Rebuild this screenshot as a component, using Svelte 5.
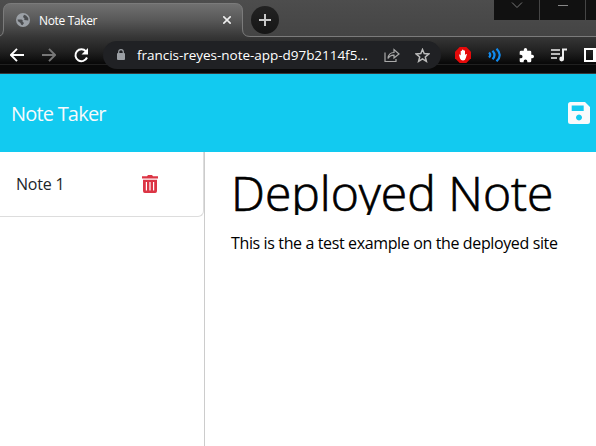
<script>
  let noteTitle = 'Deployed Note';
  let noteText = 'This is the a test example on the deployed site';
  const notes = ['Note 1'];
</script>

<div class="window">
  <div class="chrome">
    <svg class="frame" width="596" height="74" viewBox="0 0 596 74">
      <defs>
        <linearGradient id="strip" x1="0" y1="0" x2="0" y2="1">
          <stop offset="0" stop-color="#4d4d4d" /><stop offset="1" stop-color="#444" />
        </linearGradient>
        <linearGradient id="bar" gradientUnits="userSpaceOnUse" x1="0" y1="3" x2="0" y2="64">
          <stop offset="0" stop-color="#727272" /><stop offset=".28" stop-color="#585858" />
          <stop offset=".56" stop-color="#363636" /><stop offset=".8" stop-color="#202020" /><stop offset="1" stop-color="#070707" />
        </linearGradient>
      </defs>
      <rect width="596" height="37" fill="url(#strip)" />
      <path d="M0 36Q3.500 35 3.500 30V11Q3.500 3.500 11 3.500H235Q242.500 3.500 242.500 11V29Q242.500 36.500 250 36.500H596V64H0Z" fill="url(#bar)" />
      <path d="M0 36Q3.500 35 3.500 30V11Q3.500 3.500 11 3.500H235Q242.500 3.500 242.500 11V29Q242.500 36.500 250 36.500H596" fill="none" stroke="#7b7b7b" />
      <rect y="63" width="596" height="11" fill="#090909" />
      <path d="M0 64.500H596" stroke="#202020" />
      <path d="M0 73.500H596" stroke="#363a3b" />
    </svg>
    <div class="tabs">
      <div class="tab">
        <svg width="14" height="14" viewBox="0 0 14 14"><circle cx="7" cy="7" r="7" fill="#9ba0a6" /><path d="M1.500 6.500H5.500Q7.500 7 6.500 8.500L8 10 6.500 12.300Q4.500 12 4.500 10L2 8.300ZM8 1.800 7 4 8.500 5.500 8.200 7 12.300 7.500Q12.500 4 10 2.500Z" fill="#4b4d50" /></svg>
        <span class="tab-title">Note Taker</span>
        <svg class="close" width="8" height="8" viewBox="0 0 8 8"><path d="m.3.3 7.400 7.400m0-7.400-7.400 7.400" stroke="#eee" stroke-width="1.600" /></svg>
      </div>
      <div class="new-tab"><svg width="12" height="12" viewBox="0 0 12 12"><path d="M0 6H12M6 0V12" stroke="#c8c8c8" stroke-width="2" /></svg></div>
      <div class="controls">
        <span><svg width="12" height="8"><path d="m1 1.500 5 5 5-5" fill="none" stroke="#777" /></svg></span>
        <span><svg width="10" height="8"><path d="M0 4.500H10" stroke="#888" /></svg></span>
        <span></span>
      </div>
    </div>
    <div class="toolbar">
      <svg width="14" height="14" viewBox="0 0 14 14"><path d="M14 7H1.500M7 .8.9 7 7 13.200" fill="none" stroke="#fff" stroke-width="1.900" /></svg>
      <svg class="forward" width="14" height="14" viewBox="0 0 14 14"><path d="M0 7H12.500M7 .8 13.100 7 7 13.200" fill="none" stroke="#777" stroke-width="1.900" /></svg>
      <svg class="reload" width="15" height="15" viewBox="0 0 15 15"><path d="M12 3.300A6 6 0 1 0 13 9.500" fill="none" stroke="#fff" stroke-width="2" /><path d="M14 0V6.500H7.500Z" fill="#fff" /></svg>
      <div class="address">
        <svg width="8" height="12" viewBox="0 0 8 12"><rect y="4" width="8" height="7" rx="1" fill="#9ca0a5" /><path d="M1.700 5V3Q1.700.7 4 .7T6.300 3V5" fill="none" stroke="#9ca0a5" stroke-width="1.200" /></svg>
        <span class="url">francis-reyes-note-app-d97b2114f5...</span>
        <svg class="share" width="16" height="15" viewBox="0 0 16 15"><path d="M1 4.500V13.500H12V11M4 10.500Q4.500 4.500 10 4.500V1.500L15 6 10 10V7.200Q6 7 4 10.500Z" fill="none" stroke="#aaa" stroke-width="1.200" /></svg>
        <svg class="star" width="15" height="15" viewBox="0 0 15 15"><path d="M7.500 1.500 9.200 5.600 13.700 6 10.300 8.900 11.400 13.300 7.500 10.900 3.600 13.300 4.700 8.900 1.300 6 5.800 5.600Z" fill="none" stroke="#bbb" stroke-width="1.500" /></svg>
      </div>
      <div class="extensions">
        <svg width="16" height="16" viewBox="0 0 16 16"><path d="M4.700 0H11.300L16 4.700V11.300L11.300 16H4.700L0 11.300V4.700Z" fill="#e50a0a" /><path d="M4 7.500Q5 7 5.700 8.500V4Q6.300 3.300 7 4V3Q7.700 2.200 8.500 3V3.500Q9.300 3 10 4V8Q11 6.500 12 7L10.800 11Q10.200 13.500 8 13.500 5.800 13.500 5 11.500Z" fill="#fff" /></svg>
        <svg width="14" height="14" viewBox="0 0 14 14"><path d="M1 4.500Q3.500 7 1 9.500M4.500 2.700Q8.500 7 4.500 11.300M8.500.7Q15 7 8.500 13.300" fill="none" stroke="#118bef" stroke-width="2.200" /></svg>
        <svg width="15" height="15" viewBox="1 1 22 22"><path d="M20.500 11H19V7a2 2 0 0 0-2-2h-4V3.500a2.500 2.500 0 0 0-5 0V5H4a2 2 0 0 0-2 2v3.800h1.500a2.700 2.700 0 0 1 0 5.400H2V20a2 2 0 0 0 2 2h3.800v-1.500a2.700 2.700 0 0 1 5.400 0V22H17a2 2 0 0 0 2-2v-4h1.500a2.500 2.500 0 0 0 0-5Z" fill="#fff" /></svg>
        <svg width="16" height="14" viewBox="0 0 16 14"><path d="M0 2H9M0 6H9M0 10H6" stroke="#eee" stroke-width="1.700" /><path d="M12 11V1.500H16" fill="none" stroke="#eee" stroke-width="2" /><circle cx="10.700" cy="11" r="2.400" fill="#eee" /></svg>
        <svg class="panel" width="14" height="14" viewBox="0 0 14 14"><path d="M1 1H13V13H1Z" fill="none" stroke="#fff" stroke-width="2" /><path d="M9 1H13V13H9Z" fill="#fff" /></svg>
      </div>
    </div>
  </div>

  <header>
    <span class="brand">Note Taker</span>
    <svg width="22" height="22" viewBox="0 0 22 22"><path fill-rule="evenodd" d="M2.500 0H17L22 5V19.500Q22 22 19.500 22H2.500Q0 22 0 19.500V2.500Q0 0 2.500 0ZM3.700 3.500V9H15.700V3.500ZM11 12.500a3 3 0 1 0 .01 0Z" fill="#f8fafc" /></svg>
  </header>
  <main>
    <aside>
      {#each notes as note}
        <div class="note">
          <span class="note-name">{note}</span>
          <svg width="16" height="18" viewBox="0 0 16 18"><path fill-rule="evenodd" d="M0 1.200H5L6 0H10L11 1.200H16V3.400H0ZM1 4.700H15V16Q15 18 13.200 18H2.800Q1 18 1 16ZM3.800 7V15.500H5V7ZM7.400 7V15.500H8.600V7ZM11 7V15.500H12.200V7Z" fill="#dc3545" /></svg>
        </div>
      {/each}
    </aside>
    <section>
      <h1><span>{noteTitle}</span></h1>
      <p><span>{noteText}</span></p>
    </section>
  </main>
</div>

<style>
  :global(body) { margin: 0; }
  .window { width: 596px; height: 446px; display: flex; flex-direction: column; overflow: hidden; background: #fff; font-family: "Open Sans", "Noto Sans", sans-serif; }
  svg { display: block; flex: none; }
  span { white-space: nowrap; }
  .chrome { position: relative; height: 74px; flex: none; }
  .frame { position: absolute; inset: 0; }
  .tabs { position: relative; display: flex; height: 37px; }
  .tab { box-sizing: border-box; width: 243px; height: 34px; margin-top: 3px; padding: 0 12px 0 16px; display: flex; align-items: center; }
  .tab-title { margin-left: 9px; color: #fff; font-size: 12px; letter-spacing: -.35px; }
  .close { margin-left: auto; }
  .new-tab { width: 28px; height: 28px; margin: 6px 0 0 8px; border-radius: 50%; background: linear-gradient(#222, #161616); display: flex; align-items: center; justify-content: center; }
  .controls { display: flex; gap: 1px; height: 20px; margin-left: auto; background: #454545; }
  .controls span { width: 45px; background: #111; display: flex; justify-content: center; padding-top: 1px; box-sizing: border-box; }
  .controls span:last-child { width: 10px; }
  .toolbar { position: relative; display: flex; align-items: center; height: 36px; padding-left: 10px; }
  .forward { margin-left: 18px; }
  .reload { margin-left: 18px; }
  .address { box-sizing: border-box; width: 338px; height: 28px; margin-left: 14px; padding: 0 11px 0 14px; border-radius: 14px; background: #202124; display: flex; align-items: center; }
  .url { width: 232px; margin-left: 12px; color: #fff; font-size: 13.5px; letter-spacing: -.03px; }
  .share { margin-left: 15px; }
  .star { margin-left: auto; }
  .extensions { display: flex; align-items: center; gap: 17px; margin-left: 14px; width: 141px; overflow: hidden; }
  header { box-sizing: border-box; flex: none; height: 78px; display: flex; align-items: center; justify-content: space-between; padding: 0 6px 0 11px; background: #12caf0; }
  .brand { color: #f8fafc; font-size: 20px; letter-spacing: -.8px; }
  main { display: flex; flex: 1; }
  aside { width: 204px; border-right: 1px solid #ccc; }
  .note { box-sizing: border-box; height: 65px; padding: 0 45px 1px 16px; border-bottom: 1px solid #ddd; border-right: 1px solid #ddd; border-bottom-right-radius: 6px; display: flex; align-items: center; justify-content: space-between; }
  .note-name { color: #212529; font-size: 16px; letter-spacing: -.2px; }
  section { padding: 10px 0 0 26px; }
  h1 { height: 53px; margin: 0; overflow: hidden; font-size: 48px; font-weight: 300; line-height: 62px; color: #000; -webkit-text-stroke: .7px #000; }
  p { margin: 16px 0 0; font-size: 16px; letter-spacing: -.37px; line-height: 24px; color: #000; }
</style>
